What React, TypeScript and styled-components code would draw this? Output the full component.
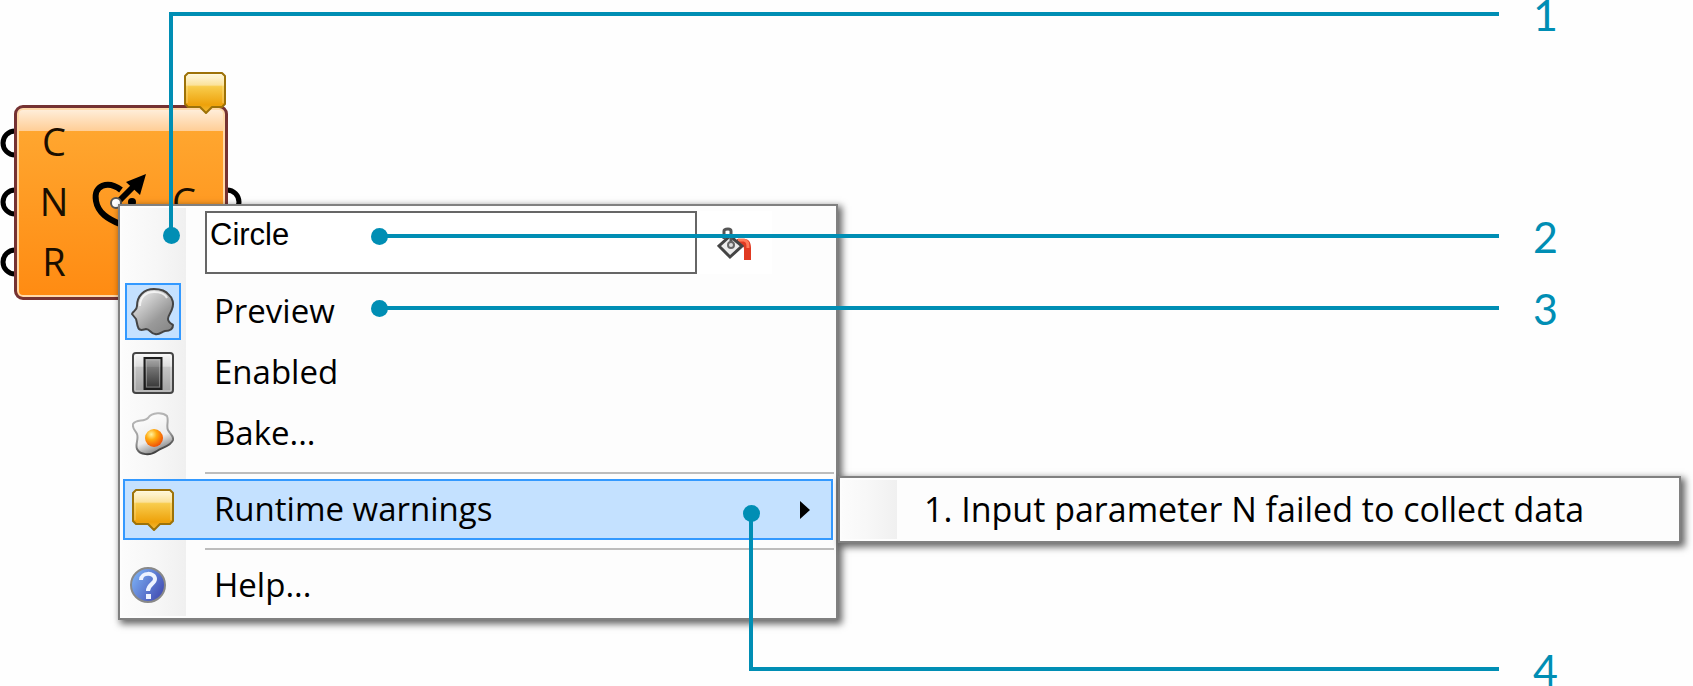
import React from "react";
import styled, { createGlobalStyle } from "styled-components";

const Global = createGlobalStyle`
  * { box-sizing: border-box; }
  body { margin: 0; background: #fefefe; }
`;

const teal = "#008eb4";
const uiFont = `"Open Sans", "Noto Sans", sans-serif`;

const Canvas = styled.main`
  position: relative;
  min-height: 100vh;
  overflow: hidden;
  font-family: ${uiFont};
`;

const Node = styled.section`
  position: absolute;
  left: 14px;
  top: 105px;
  width: 214px;
  height: 195px;
  display: grid;
  grid-template-columns: 74px 59px 68px;
  align-items: center;
  border: 3px solid #753232;
  border-radius: 9px;
  background: linear-gradient(#fff0df, #ffce96 23px, #ffa62f 23px, #ff8b12);
  box-shadow: inset 0 0 0 2px #ffd9a8;
  color: #1a0e00;
`;

const Ports = styled.div`
  display: flex;
  flex-direction: column;
  align-items: center;
  padding-bottom: 3px;
  font-size: 38px;
  line-height: 60px;
`;

const Grip = styled.svg<{ $x: number; $y: number }>`
  position: absolute;
  left: ${(p) => p.$x}px;
  top: ${(p) => p.$y}px;
`;

const NodeIcon = styled.svg`
  display: block;
  margin-left: -3px;
`;

const Balloon = styled.div`
  position: absolute;
  left: 184px;
  top: 72px;
`;

const Menu = styled.div<{ $x: number; $y: number; $width: number }>`
  position: absolute;
  left: ${(p) => p.$x}px;
  top: ${(p) => p.$y}px;
  width: ${(p) => p.$width}px;
  padding: 2px;
  border: 2px solid #808080;
  background: #fdfdfd;
  box-shadow: 3px 3px 7px 1px rgba(0, 0, 0, 0.6);
`;

const MenuBody = styled.div<{ $gutter: number }>`
  display: flex;
  flex-direction: column;
  background: linear-gradient(90deg, #fcfcfc, #f7f7f7 50%, #f0f0f0) no-repeat 0 0 / ${(p) => p.$gutter}px 100%;
`;

const Header = styled.div`
  display: flex;
  height: 73px;
  padding: 3px 0 7px 83px;
`;

const NameBox = styled.input`
  width: 492px;
  padding: 0 3px 16px;
  border: 2px solid #666;
  border-radius: 0;
  background: #fff;
  color: #000;
  font: 31px "Liberation Sans", Arial, sans-serif;
  outline: none;
`;

const BucketButton = styled.button`
  width: 75px;
  padding: 6px 0 0 20px;
  border: 0;
  background: #fff;
  text-align: left;
`;

const Item = styled.button<{ $active?: boolean }>`
  display: flex;
  align-items: center;
  height: 61px;
  margin: 0 1px;
  padding: 0 21px 0 0;
  border: 2px solid ${(p) => (p.$active ? "#3399ff" : "transparent")};
  background: ${(p) => (p.$active ? "#c4e1ff" : "transparent")};
  color: #000;
  font: 33px/54px ${uiFont};
  text-align: left;
  white-space: nowrap;
`;

const SubItem = styled(Item)`
  height: 59px;
  padding-left: 79px;
  font-size: 34px;
`;

const IconSlot = styled.span<{ $checked?: boolean }>`
  display: flex;
  align-items: center;
  justify-content: center;
  width: 56px;
  height: 57px;
  margin-right: 33px;
  border: 2px solid ${(p) => (p.$checked ? "#3399ff" : "transparent")};
  background: ${(p) => (p.$checked ? "#c4e1ff" : "transparent")};
`;

const Label = styled.span`
  flex: 1;
  padding-bottom: 1px;
`;

const Separator = styled.hr`
  width: calc(100% - 83px);
  height: 2px;
  margin: 8px 0 5px 83px;
  border: 0;
  background: #bdbdbd;
`;

const Callout = styled.div<{ $x: number; $y: number }>`
  position: absolute;
  left: ${(p) => p.$x}px;
  top: ${(p) => p.$y}px;
  right: 135px;
  display: flex;
  align-items: center;
  height: 52px;
  color: ${teal};
  font: 43px/50px Lato, sans-serif;
`;

const Mark = styled.span`
  padding-top: 2px;
`;

const Line = styled.span`
  flex: 1;
  height: 4px;
  margin-right: 34px;
  background: ${teal};
`;

const Dot = styled.span`
  width: 17px;
  height: 17px;
  margin-right: -2px;
  border-radius: 50%;
  background: ${teal};
`;

const Stem = styled.span<{ $x: number; $y: number; $length: number; $end: "top" | "bottom" }>`
  position: absolute;
  left: ${(p) => p.$x}px;
  top: ${(p) => p.$y}px;
  width: 4px;
  height: ${(p) => p.$length}px;
  background: ${teal};

  &::after {
    content: "";
    position: absolute;
    left: -6px;
    ${(p) => p.$end}: -8px;
    width: 17px;
    height: 17px;
    border-radius: 50%;
    background: ${teal};
  }
`;

const BalloonIcon = ({ id }: { id: string }) => (
  <svg width="42" height="42" viewBox="0 0 42 42" aria-hidden="true">
    <defs>
      <linearGradient id={id} x1="0" y1="0" x2="0" y2="1">
        <stop offset="0" stopColor="#fffbe9" />
        <stop offset=".3" stopColor="#fbe29b" />
        <stop offset=".34" stopColor="#f8cc4c" />
        <stop offset=".8" stopColor="#eea10a" />
        <stop offset="1" stopColor="#f3bd3c" />
      </linearGradient>
    </defs>
    <path d="M4 1H38L41 4V32L38 35H28L22 41L16 35H4L1 32V4Z" fill={`url(#${id})`} stroke="#9d7208" strokeWidth="2" strokeLinejoin="round" />
    <path d="M3 31V4H39V31" fill="none" stroke="#fff2b8" strokeOpacity=".5" />
  </svg>
);

const HeadIcon = () => (
  <svg width="44" height="48" viewBox="0 0 44 48" aria-hidden="true">
    <defs>
      <linearGradient id="head" x1="0" y1="0" x2=".8" y2="1">
        <stop offset="0" stopColor="#f4f4f4" />
        <stop offset=".3" stopColor="#d2d2d2" />
        <stop offset=".7" stopColor="#9a9a9a" />
        <stop offset="1" stopColor="#888" />
      </linearGradient>
    </defs>
    <path
      d="M6 18C6 8 13 1 23 1C31 1 35 3 38 7C42 10 43 16 41 21C40 25 37 27 37 31C37 34 39 35 42 37C42 41 39 43 34 43C30 44 29 47 24 46C20 46 19 41 15 41C11 42 8 43 7 39C6 37 6 34 5 31L1 26C2 23 6 23 6 18Z"
      fill="url(#head)"
      stroke="#444"
      strokeWidth="2"
      strokeLinejoin="round"
    />
    <path d="M9 18C9 9 15 4 23 4C30 4 34 6 36 10" fill="none" stroke="#fff" strokeOpacity=".7" strokeWidth="2" />
  </svg>
);

const SwitchIcon = () => (
  <svg width="42" height="42" viewBox="0 0 42 42" aria-hidden="true">
    <defs>
      <linearGradient id="plate" x1="0" y1="0" x2="0" y2="1">
        <stop offset="0" stopColor="#f7f7f7" />
        <stop offset=".33" stopColor="#ddd" />
        <stop offset=".36" stopColor="#c4c4c4" />
        <stop offset="1" stopColor="#a0a0a0" />
      </linearGradient>
      <linearGradient id="lever" x1="0" y1="0" x2="0" y2="1">
        <stop offset="0" stopColor="#aaa" />
        <stop offset=".27" stopColor="#8a8a8a" />
        <stop offset=".3" stopColor="#777" />
        <stop offset="1" stopColor="#333" />
      </linearGradient>
    </defs>
    <rect x="1" y="1" width="40" height="40" rx="3" fill="url(#plate)" stroke="#444" strokeWidth="2" />
    <rect x="3" y="3" width="36" height="36" fill="none" stroke="#fff" strokeOpacity=".5" />
    <rect x="12.500" y="6" width="17" height="31" fill="url(#lever)" stroke="#1c1c1c" strokeWidth="2" />
    <rect x="14.500" y="8" width="13" height="27" fill="none" stroke="#bbb" strokeOpacity=".5" />
  </svg>
);

const EggIcon = () => (
  <svg width="42" height="44" viewBox="0 0 42 44" aria-hidden="true">
    <defs>
      <linearGradient id="white" x1=".2" y1="0" x2=".6" y2="1">
        <stop offset="0" stopColor="#fff" />
        <stop offset=".65" stopColor="#ececec" />
        <stop offset="1" stopColor="#777" />
      </linearGradient>
      <linearGradient id="rim" x1=".3" y1="0" x2=".6" y2="1">
        <stop offset="0" stopColor="#bbb" />
        <stop offset=".6" stopColor="#999" />
        <stop offset="1" stopColor="#333" />
      </linearGradient>
      <radialGradient id="yolk" cx=".35" cy=".3" r=".75">
        <stop offset="0" stopColor="#fff3a0" />
        <stop offset=".4" stopColor="#ffab10" />
        <stop offset="1" stopColor="#f04a05" />
      </radialGradient>
    </defs>
    <path d="M1 12C4 7 12 10 16 6C20 0 31 0 35 4C37 9 34 14 36 18C38 22 42 24 41 28C39 34 31 35 25 39C18 44 8 43 5 37C3 32 7 27 5 22C3 18 0 16 1 12Z" fill="url(#white)" stroke="url(#rim)" strokeWidth="2" />
    <circle cx="22" cy="26" r="9" fill="url(#yolk)" />
  </svg>
);

const HelpIcon = () => (
  <svg width="48" height="38" viewBox="0 0 48 38" aria-hidden="true">
    <defs>
      <linearGradient id="help" x1="0" y1=".2" x2="1" y2=".8">
        <stop offset="0" stopColor="#7db2f5" />
        <stop offset="1" stopColor="#4048b0" />
      </linearGradient>
    </defs>
    <circle cx="19" cy="18" r="17" fill="url(#help)" stroke="#888" strokeWidth="2" />
    <path d="M12 13C12 5 26 5 26 12C26 17 19 17 19 24" fill="none" stroke="#eef3ff" strokeWidth="4" />
    <rect x="17" y="27" width="5" height="5" fill="#eef3ff" />
  </svg>
);

const BucketIcon = () => (
  <svg width="35" height="34" viewBox="0 0 35 34" aria-hidden="true">
    <path d="M20 12H27C33 12 34 17 34 21V33H27V22C27 19 25 18 20 17Z" fill="#e03a22" />
    <path d="M21 13H27C31 14 31 17 31 21" fill="none" stroke="#ff7a58" strokeWidth="3" />
    <path d="M13 9L25 19L13 30L2 19Z" fill="#ececec" stroke="#444" strokeWidth="3" />
    <path d="M7 12V4Q7 2 11 2Q14 2 14 4V15" fill="none" stroke="#555" strokeWidth="3" />
    <circle cx="14" cy="18" r="3" fill="#ddd" stroke="#666" strokeWidth="2" />
  </svg>
);

export default function App() {
  return (
    <>
      <Global />
      <Canvas>
        {[128, 187, 247].map((y) => (
          <Grip key={y} $x={0} $y={y} width="18" height="30" viewBox="0 0 18 30">
            <circle cx="15" cy="15" r="12" fill="#fff" stroke="#000" strokeWidth="5" />
          </Grip>
        ))}
        <Grip $x={225} $y={187} width="18" height="30" viewBox="0 0 18 30">
          <circle cx="2" cy="15" r="12" fill="#fff" stroke="#000" strokeWidth="5" />
        </Grip>
        <Node>
          <Ports>
            <span>C</span>
            <span>N</span>
            <span>R</span>
          </Ports>
          <NodeIcon width="62" height="62" viewBox="0 0 62 62" aria-hidden="true">
            <path d="M33 18C20 8 5 13 8 29C10 41 20 47 32 52" fill="none" stroke="#000" strokeWidth="6" />
            <path d="M31 29L48 12" stroke="#000" strokeWidth="6" />
            <path d="M58 2L52 23L38 10Z" fill="#000" />
            <circle cx="44" cy="30" r="4" fill="#000" />
            <circle cx="28" cy="31" r="5" fill="#fff" stroke="#555" strokeWidth="2" />
          </NodeIcon>
          <Ports>
            <span>C</span>
          </Ports>
        </Node>
        <Balloon>
          <BalloonIcon id="balloon-node" />
        </Balloon>

        <Menu $x={118} $y={204} $width={720} role="menu">
          <MenuBody $gutter={64}>
            <Header>
              <NameBox aria-label="Component name" defaultValue="Circle" />
              <BucketButton aria-label="Fill colour">
                <BucketIcon />
              </BucketButton>
            </Header>
            <Item role="menuitemcheckbox" aria-checked="true">
              <IconSlot $checked>
                <HeadIcon />
              </IconSlot>
              <Label>Preview</Label>
            </Item>
            <Item role="menuitem">
              <IconSlot>
                <SwitchIcon />
              </IconSlot>
              <Label>Enabled</Label>
            </Item>
            <Item role="menuitem">
              <IconSlot>
                <EggIcon />
              </IconSlot>
              <Label>Bake...</Label>
            </Item>
            <Separator />
            <Item role="menuitem" aria-haspopup="menu" $active>
              <IconSlot>
                <BalloonIcon id="balloon-item" />
              </IconSlot>
              <Label>Runtime warnings</Label>
              <svg width="10" height="18" viewBox="0 0 10 18" aria-hidden="true">
                <path d="M0 0L10 9L0 18Z" />
              </svg>
            </Item>
            <Separator />
            <Item role="menuitem">
              <IconSlot>
                <HelpIcon />
              </IconSlot>
              <Label>Help...</Label>
            </Item>
          </MenuBody>
        </Menu>

        <Menu $x={838} $y={476} $width={843} role="menu">
          <MenuBody $gutter={55}>
            <SubItem role="menuitem">
              <Label>1. Input parameter N failed to collect data</Label>
            </SubItem>
          </MenuBody>
        </Menu>

        <Stem $x={169} $y={12} $length={224} $end="bottom" />
        <Callout $x={169} $y={-12}>
          <Line />
          <Mark>1</Mark>
        </Callout>
        <Callout $x={371} $y={210}>
          <Dot />
          <Line />
          <Mark>2</Mark>
        </Callout>
        <Callout $x={371} $y={282}>
          <Dot />
          <Line />
          <Mark>3</Mark>
        </Callout>
        <Stem $x={749} $y={513} $length={158} $end="top" />
        <Callout $x={749} $y={643}>
          <Line />
          <Mark>4</Mark>
        </Callout>
      </Canvas>
    </>
  );
}
